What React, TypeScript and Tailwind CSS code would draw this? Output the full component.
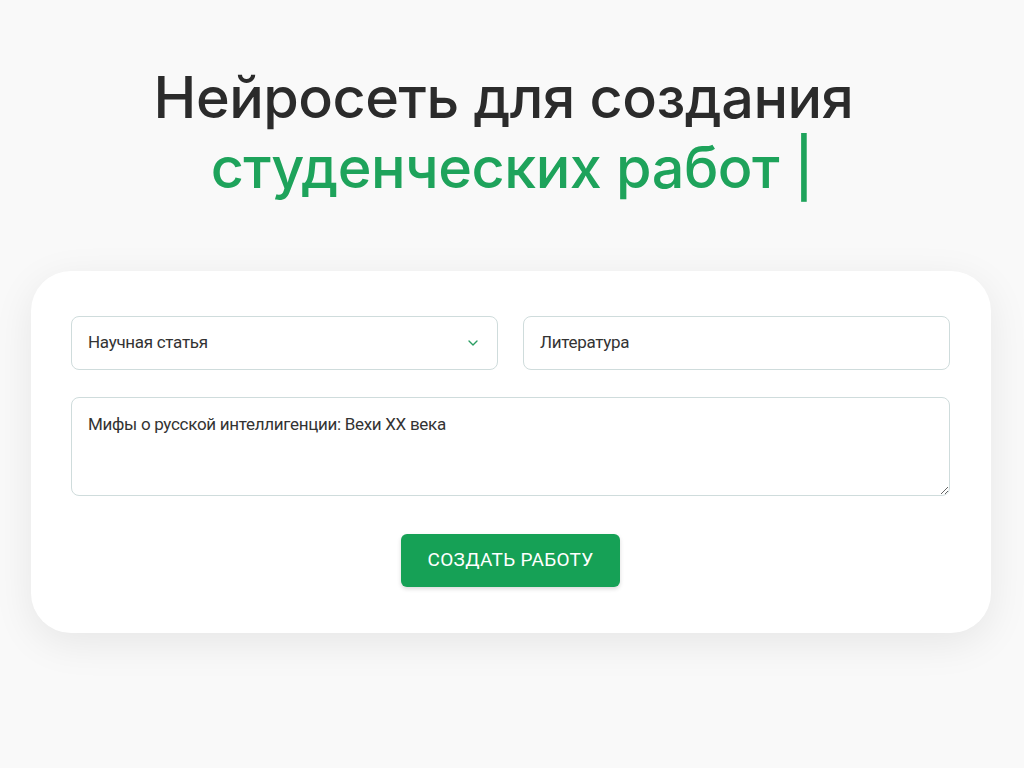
import { ChevronDown } from "lucide-react";

function App() {
  return (
    <div className="min-h-[768px] w-[1024px] bg-[#f9f9f9] pt-[62px] font-['Inter',sans-serif]">
      <h1 className="text-center text-[57.5px] leading-[70px] font-medium tracking-[-0.5px]">
        <span className="block pr-[17px] text-[#2b2b2b]">Нейросеть для создания</span>
        <span className="block text-[#1ea35b]">студенческих работ |</span>
      </h1>

      <div className="ml-[31px] mr-[33px] mt-[69px] rounded-[40px] bg-white pl-[40px] pr-[41px] pt-[45px] pb-[46px] shadow-[0_10px_40px_rgba(0,0,0,0.08)] font-['Roboto',sans-serif] text-[#333]">
        <div className="grid grid-cols-2 gap-[25px]">
          <div className="flex h-[54px] items-center justify-between rounded-[8px] border border-[#cfdcdc] px-[16px]">
            <span className="text-[17px] tracking-[-0.3px]">Научная статья</span>
            <ChevronDown className="h-4 w-4 text-[#2a9d62]" strokeWidth={2} />
          </div>
          <div className="flex h-[54px] items-center rounded-[8px] border border-[#cfdcdc] px-[16px]">
            <span className="text-[17px] tracking-[-0.3px]">Литература</span>
          </div>
        </div>

        <textarea
          className="mt-[27px] block h-[99px] w-full rounded-[8px] border border-[#cfdcdc] px-[16px] py-[14px] text-[17px] tracking-[-0.3px] text-[#333] outline-none"
          defaultValue="Мифы о русской интеллигенции: Вехи XX века"
        />

        <div className="mt-[38px] flex justify-center">
          <button className="h-[53px] w-[219px] rounded-[6px] bg-[#16a156] text-[19px] tracking-[0.3px] text-white shadow-[0_2px_4px_rgba(0,0,0,0.15)]">
            СОЗДАТЬ РАБОТУ
          </button>
        </div>
      </div>
    </div>
  );
}

export default App;
